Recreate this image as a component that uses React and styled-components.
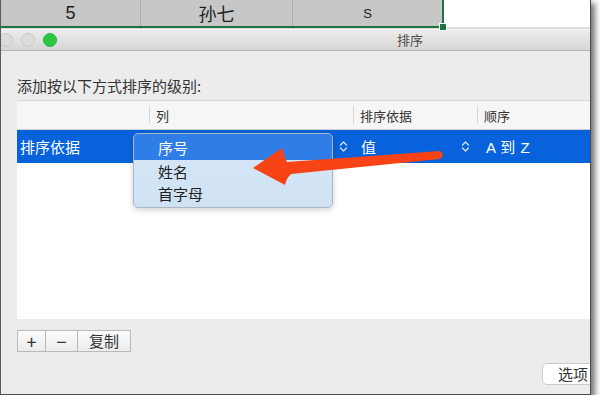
import styled, { createGlobalStyle } from "styled-components";

const Global = createGlobalStyle`
  html, body {
    margin: 0;
    padding: 0;
    background: #fff;
  }
  body {
    font-family: "Liberation Sans", "Noto Sans CJK SC", sans-serif;
    -webkit-font-smoothing: antialiased;
  }
`;

const Frame = styled.div`
  position: relative;
  width: 589px;
  height: 394px;
  border-left: 1px solid #5c5c5c;
  border-right: 1px solid #4a4a4a;
  border-bottom: 1px solid #4a4a4a;
  box-shadow: 4px 3px 6px rgba(0, 0, 0, 0.55);
  overflow: hidden;
  display: flex;
  flex-direction: column;
  background: #ececec;
`;

const Sheet = styled.div`
  display: grid;
  grid-template-columns: 443px 1fr;
  height: 27px;
  background: #fff;
`;

const SheetCells = styled.div`
  position: relative;
  display: grid;
  grid-template-columns: 140px 152px 1fr;
  background: #c7c7c7;
  border-bottom: 2px solid #1f7244;
  border-right: 2px solid #1f7244;
`;

const Cell = styled.div`
  display: flex;
  align-items: center;
  justify-content: center;
  border-right: ${(p) => (p.$last ? "none" : "1px solid #b0b0b0")};
  font-size: ${(p) => (p.$small ? "13px" : "18px")};
  color: #1e1e1e;
  padding-top: ${(p) => (p.$small ? "1px" : "0")};
`;

const Handle = styled.div`
  position: absolute;
  right: -5px;
  bottom: -5px;
  width: 6px;
  height: 6px;
  background: #1f7244;
  border: 1px solid #fff;
`;

const NextRow = styled.div`
  display: grid;
  grid-template-columns: 140px 152px 1fr;
  height: 2px;
  background: #dedede;
`;

const NextCell = styled.div`
  border-right: 1px solid #b8b8b8;
`;

const TitleBar = styled.div`
  height: 21px;
  display: flex;
  align-items: center;
  background: linear-gradient(#ececec, #d6d6d6);
  border-top: 1px solid #f4f4f4;
  border-bottom: 1px solid #b4b4b4;
  box-sizing: border-box;
  height: 22px;
`;

const Lights = styled.div`
  display: flex;
  gap: 8px;
  margin-left: -2px;
`;

const Light = styled.span`
  width: 12px;
  height: 12px;
  border-radius: 50%;
  background: ${(p) => (p.$green ? "#2ac840" : "#dcdcdc")};
  border: 1px solid ${(p) => (p.$green ? "#25b53a" : "#c8c8c8")};
`;

const Title = styled.div`
  margin-left: 340px;
  font-size: 13px;
  color: #4d4d4d;
  font-family: "Noto Sans CJK SC", sans-serif;
  line-height: 16px;
`;

const Body = styled.div`
  flex: 1;
  display: flex;
  flex-direction: column;
  padding: 26px 0 9px 16px;
  font-family: "Noto Sans CJK SC", sans-serif;
`;

const Label = styled.div`
  font-size: 15px;
  line-height: 18px;
  color: #333;
  margin-bottom: 5px;
`;

const Table = styled.div`
  height: 218px;
  background: #fff;
  border-top: 1px solid #d9d9d9;
  display: flex;
  flex-direction: column;
`;

const cols = "132px 204px 124px 1fr";

const Header = styled.div`
  display: grid;
  grid-template-columns: ${cols};
  height: 28px;
  background: #f6f6f6;
  border-bottom: 1px solid #d2d2d2;
  box-sizing: border-box;
  height: 29px;
`;

const HeadCell = styled.div`
  align-self: center;
  height: 18px;
  display: flex;
  align-items: center;
  padding-left: 6px;
  font-size: 13px;
  color: #333;
  border-left: ${(p) => (p.$first ? "none" : "1px solid #d6d6d6")};
`;

const Row = styled.div`
  position: relative;
  display: grid;
  grid-template-columns: ${cols};
  height: 33px;
  background: #0862dc;
  color: #fff;
  font-size: 15px;
`;

const RowCell = styled.div`
  display: flex;
  align-items: center;
  justify-content: ${(p) => (p.$end ? "flex-end" : "flex-start")};
  padding-left: ${(p) => p.$pl || 0}px;
  padding-right: ${(p) => p.$pr || 0}px;
  gap: 13px;
`;

const Latin = styled.span`
  font-family: "Liberation Sans", "Noto Sans CJK SC", sans-serif;
  word-spacing: 1px;
`;

const Menu = styled.div`
  position: absolute;
  left: 116px;
  top: 3px;
  width: 200px;
  padding-bottom: 3px;
  border-radius: 5px;
  background: linear-gradient(#d6e8f8, #cfe2f3);
  border: 1px solid #aab6c2;
  box-shadow: 0 2px 6px rgba(0, 0, 0, 0.18);
  overflow: hidden;
  box-sizing: border-box;
  display: flex;
  flex-direction: column;
`;

const Item = styled.div`
  height: ${(p) => (p.$active ? "26px" : "22px")};
  display: flex;
  align-items: center;
  padding-left: 24px;
  font-size: 15px;
  color: ${(p) => (p.$active ? "#fff" : "#222")};
  background: ${(p) => (p.$active ? "#2f7de6" : "transparent")};
`;

const Footer = styled.div`
  display: flex;
  margin-top: 11px;
`;

const SegButton = styled.button`
  height: 22px;
  width: ${(p) => p.$w}px;
  margin: 0;
  margin-left: ${(p) => (p.$first ? "0" : "-1px")};
  padding: 0;
  border: 1px solid #b9b9b9;
  background: linear-gradient(#fbfbfb, #ececec);
  color: #333;
  font-family: "Noto Sans CJK SC", sans-serif;
  font-size: ${(p) => (p.$text ? "15px" : "18px")};
  line-height: 18px;
  display: flex;
  align-items: center;
  justify-content: center;
`;

const OptionsRow = styled.div`
  display: flex;
  justify-content: flex-end;
  margin-top: 11px;
  margin-right: -14px;
`;

const OptionsButton = styled.button`
  height: 22px;
  width: 62px;
  margin: 0;
  padding: 0;
  border: 1px solid #cacaca;
  border-radius: 5px;
  background: #fff;
  color: #333;
  font-family: "Noto Sans CJK SC", sans-serif;
  font-size: 15px;
  line-height: 18px;
`;

const Overlay = styled.svg`
  position: absolute;
  left: -1px;
  top: 0;
  pointer-events: none;
`;

const UpDown = () => (
  <svg width="9" height="13" viewBox="0 0 9 13">
    <path
      d="M1.5 5 L4.5 2 L7.5 5 M1.5 8 L4.5 11 L7.5 8"
      fill="none"
      stroke="#d5e3fa"
      strokeWidth="1.3"
      strokeLinecap="round"
      strokeLinejoin="round"
    />
  </svg>
);

export default function App() {
  return (
    <>
      <Global />
      <Frame>
        <Sheet>
          <SheetCells>
            <Cell>5</Cell>
            <Cell>孙七</Cell>
            <Cell $small $last>S</Cell>
            <Handle />
          </SheetCells>
          <div />
        </Sheet>
        <NextRow>
          <NextCell />
          <NextCell />
          <div />
        </NextRow>
        <TitleBar>
          <Lights>
            <Light />
            <Light />
            <Light $green />
          </Lights>
          <Title>排序</Title>
        </TitleBar>
        <Body>
          <Label>添加按以下方式排序的级别:</Label>
          <Table>
            <Header>
              <HeadCell $first />
              <HeadCell>列</HeadCell>
              <HeadCell>排序依据</HeadCell>
              <HeadCell>顺序</HeadCell>
            </Header>
            <Row>
              <RowCell $pl={3}>排序依据</RowCell>
              <RowCell $end $pr={5}>
                <UpDown />
              </RowCell>
              <RowCell $pl={8} style={{ justifyContent: "space-between" }} $pr={7}>
                <span>值</span>
                <UpDown />
              </RowCell>
              <RowCell $pl={9}>
                <Latin>A 到 Z</Latin>
              </RowCell>
              <Menu>
                <Item $active>序号</Item>
                <Item>姓名</Item>
                <Item>首字母</Item>
              </Menu>
            </Row>
          </Table>
          <Footer>
            <SegButton $first $w={29}>+</SegButton>
            <SegButton $w={33}>−</SegButton>
            <SegButton $w={54} $text>复制</SegButton>
          </Footer>
          <OptionsRow>
            <OptionsButton>选项</OptionsButton>
          </OptionsRow>
        </Body>
        <Overlay width="600" height="404" viewBox="0 0 600 404">
          <path
            d="M253 168 L282 148 Q284 156 287 162 L440 151 Q446 155 440 159 L291 174 Q286 179 285 185 Z"
            fill="#f84316"
          />
        </Overlay>
      </Frame>
    </>
  );
}
